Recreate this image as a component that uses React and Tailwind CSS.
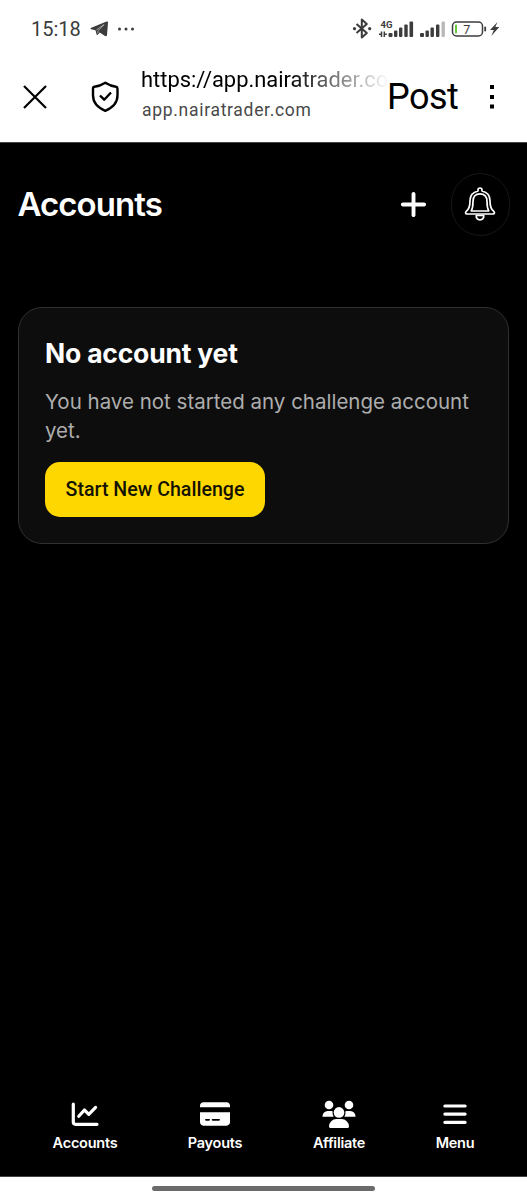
import React from "react";
import { FaCreditCard, FaPlus } from "react-icons/fa6";

function StatusBar() {
  return (
    <div className="flex h-[58px] items-center pl-[31px] pr-[27px] text-[#3c3c3c]">
      <span className="text-[20px] leading-[24px]">15:18</span>
      <svg className="ml-[9px] h-[16px] w-[19px]" viewBox="0 0 19 16" fill="currentColor">
        <path d="M.7 7.100 16.500.5Q18.300 0 18 1.700l-1 12.500q-.5 1.700-2 .7L9.800 11.500l-2.100 2.300q-1 .6-1.200-.6L5.500 9.200 1 8.200q-.9-.5-.3-1.100Z" />
        <path d="m6.300 9 7.700-5.400-5.700 6-.7 2.700" fill="none" stroke="white" strokeWidth=".5" />
      </svg>
      <svg className="ml-[8px] h-[4px] w-[18px]" viewBox="0 0 18 4" fill="currentColor">
        <circle cx="2.500" cy="2" r="1.500" /><circle cx="9" cy="2" r="1.500" /><circle cx="15.500" cy="2" r="1.500" />
      </svg>
      <div className="flex-1" />
      <svg className="h-[24px] w-[148px]" viewBox="352 16.500 148 24" fill="currentColor">
        <path d="m356.500 23.500 10.300 9-5 4.500V19l5 4.500-10.300 9" fill="none" stroke="currentColor" strokeWidth="2" strokeLinejoin="round" />
        <circle cx="354.500" cy="28.200" r="1.600" /><circle cx="369.700" cy="28.200" r="1.600" />
        <text x="380.500" y="27" fontSize="9.500" fontWeight="700" fontFamily="Roboto, sans-serif">4G</text>
        <path d="M381.500 31v5.500M384.300 31v5.500M379 33.700h2.500M384.300 33.700h2.500" stroke="currentColor" strokeWidth="1.500" />
        <rect x="388.500" y="32.500" width="4" height="4" rx="1" />
        <rect x="394" y="30" width="3.400" height="6.500" rx="1" />
        <rect x="399" y="27" width="3.400" height="9.500" rx="1" />
        <rect x="404.300" y="24" width="3.400" height="12.500" rx="1" />
        <rect x="409.500" y="21" width="3.600" height="15.500" rx="1" />
        <rect x="420" y="32.500" width="4" height="4" rx="1" />
        <rect x="425.500" y="30" width="3.400" height="6.500" rx="1" />
        <rect x="430.500" y="27" width="3.400" height="9.500" rx="1" />
        <rect x="436" y="24" width="3.400" height="12.500" rx="1" />
        <rect x="441.500" y="21" width="3.400" height="15.500" rx="1" fill="#b9b9b9" />
        <rect x="452.500" y="21.500" width="30" height="14" rx="4" fill="none" stroke="currentColor" strokeWidth="1.500" />
        <rect x="455" y="24" width="2" height="9" rx="1" fill="#66c936" />
        <rect x="484.300" y="26" width="1.800" height="5" rx=".9" />
        <text x="463.300" y="33" fontSize="12.500" fontFamily="Roboto, sans-serif">7</text>
        <path d="m497.500 21.500-7.500 8h3.800l-2.500 6 8-9h-4Z" />
      </svg>
    </div>
  );
}

function BrowserBar() {
  return (
    <div className="flex h-[84px] items-start pt-[8px] text-black">
      <svg className="ml-[23px] mt-[19px] size-[24px]" viewBox="0 0 24 24" fill="none" stroke="currentColor" strokeWidth="2.200">
        <path d="m1 1 22 22M23 1 1 23" />
      </svg>
      <svg className="ml-[44px] mt-[15px] h-[32px] w-[28px]" viewBox="0 0 28 32" fill="none" stroke="currentColor" strokeWidth="2.400" strokeLinejoin="round">
        <path d="M14.300 1.800Q20 5.400 25 5.800q1.500.2 1.500 1.900v6.600C26.500 21.500 21 27 14.300 29.800 7.500 27 2 21.500 2 14.300V7.700Q2 6 3.500 5.800 8.600 5.400 14.300 1.800Z" />
        <path d="m9 14.500 4.200 4.200 6.800-7.200" />
      </svg>
      <div className="ml-[22px] w-[246px]">
        <div className="w-[246px] whitespace-nowrap text-[21.900px] leading-[28px] [mask-image:linear-gradient(to_right,black_60%,transparent_101%)]">https://app.nairatrader.co</div>
        <div className="pl-px pt-[5px] text-[17.500px] leading-[22px] tracking-[0.7px] text-[#484848]">app.nairatrader.com</div>
      </div>
      <div className="mt-[8px] w-[71px] text-[36px] leading-[46px] tracking-[-0.5px]">Post</div>
      <svg className="ml-[31px] mt-[18px] h-[26px] w-[6px]" viewBox="0 0 6 26" fill="currentColor">
        <path d="M1 1h4v4H1zM1 11h4v4H1zM1 20.500h4v4H1z" />
      </svg>
    </div>
  );
}

function BellIcon() {
  return (
    <svg className="h-[34px] w-[32px]" viewBox="0 0 32 34" fill="none" stroke="white" strokeWidth="1.700" strokeLinejoin="round">
      <path d="M14 4V3a2 2 0 0 1 4 0v1c5 1.100 8 4.900 8 9.800 0 5.200.6 8.300 3.700 10.500 1.300 1.100.8 2.700-.6 2.700H2.900c-1.400 0-1.900-1.600-.6-2.700C5.400 22.100 6 19 6 13.800 6 8.900 9 5.100 14 4Z" />
      <path d="M7.300 24c1.300-2.500 1.700-5.500 1.700-9.500C9 9.300 11.500 6.800 16 6.800s7 2.500 7 7.700c0 4 .4 7 1.700 9.500ZM12.200 28.500h7.600c0 5.700-7.600 5.700-7.600 0Z" />
    </svg>
  );
}

function ChartIcon() {
  return (
    <svg className="h-[28px] w-[28px]" viewBox="0 0 28 28" fill="none" stroke="currentColor" strokeWidth="3.200" strokeLinecap="round" strokeLinejoin="round">
      <path d="M2.300 4.200v17.900q0 2.200 2.200 2.200H26M7.800 16.200l5.600-6.200 4.400 4.300 6.800-6.900" />
    </svg>
  );
}

function UsersIcon() {
  return (
    <svg className="h-[28px] w-[34px]" viewBox="0 0 34 28" fill="currentColor">
      <circle cx="7" cy="5" r="4.300" /><circle cx="27" cy="5" r="4.300" />
      <path d="M.5 16.700v-.5a5.200 5.200 0 0 1 5.200-5.200h3.500q1 0 1.400.2-.5 3 1 5.500ZM33.500 16.700v-.5a5.200 5.200 0 0 0-5.200-5.200h-3.500q-1 0-1.400.2.500 3-1 5.500Z" />
      <circle cx="17" cy="12.400" r="5.300" />
      <path d="M7 26.500a7.500 7.500 0 0 1 7.500-7.500h5a7.500 7.500 0 0 1 7.500 7.500q0 1.400-1.200 1.400H8.200Q7 27.900 7 26.500Z" />
    </svg>
  );
}

function MenuIcon() {
  return (
    <svg className="h-[28px] w-[28px]" viewBox="0 0 28 28" fill="none" stroke="currentColor" strokeWidth="3.200" strokeLinecap="round">
      <path d="M3.900 6h20.200M3.900 14.100h20.200M3.900 22.300h20.200" />
    </svg>
  );
}

function NavItem({ icon, label, className }) {
  return (
    <div className={"flex flex-col items-center gap-[6px] " + className}>
      <div className="flex h-[28px] items-center">{icon}</div>
      <span className="text-[14.500px] font-semibold leading-[18px] tracking-[-0.25px]">{label}</span>
    </div>
  );
}

export default function App() {
  return (
    <div className="flex h-[1200px] w-[527px] flex-col overflow-hidden bg-white font-['Roboto',sans-serif]">
      <StatusBar />
      <BrowserBar />
      <main className="flex flex-1 flex-col border-y border-[#444] bg-black font-['Inter',sans-serif] text-white">
        <header className="flex h-[122px] items-center pl-[17.500px] pr-[17.500px]">
          <h1 className="flex-1 text-[33px] font-semibold leading-[40px] tracking-[-0.95px]">Accounts</h1>
          <FaPlus className="mr-[22px] size-[31px]" />
          <button className="flex h-[63px] w-[59px] items-center justify-center rounded-full border border-[#171717]">
            <BellIcon />
          </button>
        </header>
        <section className="mx-[18px] mt-[42px] h-[237px] rounded-[24px] border border-[#303030] bg-[#0d0d0d] pl-[26px] pr-[20px] pt-[28px]">
          <h2 className="text-[26.500px] font-bold leading-[34px] tracking-[-0.2px]">No account yet</h2>
          <p className="mt-[17px] text-[20.500px] leading-[29px] text-[#adadad]">You have not started any challenge account yet.</p>
          <button className="mt-[17px] h-[55px] w-[220px] rounded-[15px] bg-[#ffd700] font-['Roboto',sans-serif] text-[19.600px] font-medium text-[#141200]">Start New Challenge</button>
        </section>
        <div className="flex-1" />
        <nav className="flex h-[76px] pl-[40px]">
          <NavItem className="w-[90px]" icon={<ChartIcon />} label="Accounts" />
          <NavItem className="ml-[40px] w-[90px]" icon={<FaCreditCard className="h-[30px] w-[30px]" />} label="Payouts" />
          <NavItem className="ml-[34px] w-[90px]" icon={<UsersIcon />} label="Affiliate" />
          <NavItem className="ml-[26px] w-[90px]" icon={<MenuIcon />} label="Menu" />
        </nav>
      </main>
      <footer className="flex h-[23px] justify-center pt-[9px]">
        <div className="h-[5px] w-[223px] rounded-full bg-[#6b6b6b]" />
      </footer>
    </div>
  );
}
